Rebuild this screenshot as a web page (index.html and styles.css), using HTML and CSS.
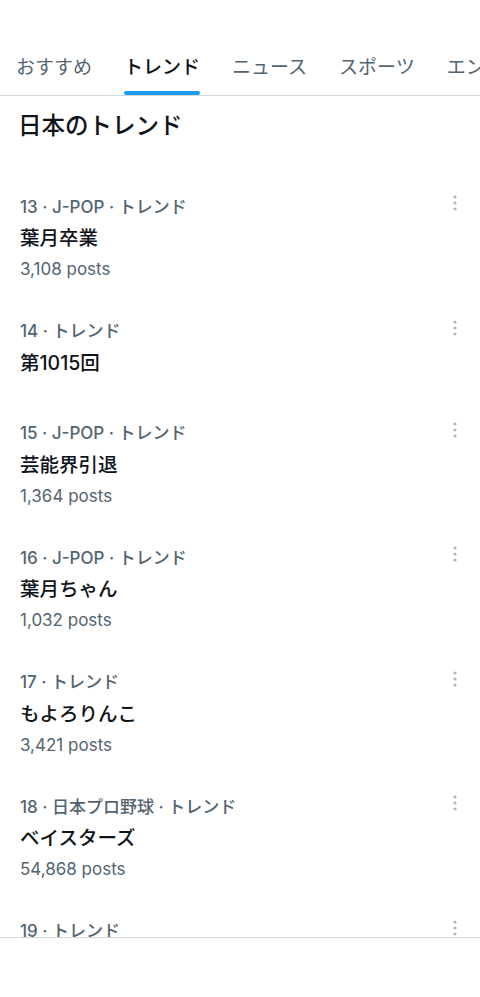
FILE: index.html
```html
<!DOCTYPE html>
<html lang="ja">

<head>
	<meta charset="UTF-8">
	<title>トレンド</title>
	<link rel="stylesheet" href="styles.css">
</head>

<body>
	<div class="status"></div>
	<nav class="tabs">
		<div class="tab">おすすめ</div>
		<div class="tab active">トレンド<span class="bar"></span></div>
		<div class="tab">ニュース</div>
		<div class="tab">スポーツ</div>
		<div class="tab">エンタメ</div>
	</nav>
	<main class="content">
		<h1 class="heading">日本のトレンド</h1>
		<ul class="list">
			<li class="item">
				<div class="meta"><span>13 · J-POP · トレンド</span>
					<svg class="more" viewBox="0 0 18 16"><circle cx="9" cy="2" r="1.6"/><circle cx="9" cy="8" r="1.6"/><circle cx="9" cy="14" r="1.6"/></svg>
				</div>
				<div class="title">葉月卒業</div>
				<div class="posts">3,108 posts</div>
			</li>
			<li class="item">
				<div class="meta"><span>14 · トレンド</span>
					<svg class="more" viewBox="0 0 18 16"><circle cx="9" cy="2" r="1.6"/><circle cx="9" cy="8" r="1.6"/><circle cx="9" cy="14" r="1.6"/></svg>
				</div>
				<div class="title">第1015回</div>
			</li>
			<li class="item">
				<div class="meta"><span>15 · J-POP · トレンド</span>
					<svg class="more" viewBox="0 0 18 16"><circle cx="9" cy="2" r="1.6"/><circle cx="9" cy="8" r="1.6"/><circle cx="9" cy="14" r="1.6"/></svg>
				</div>
				<div class="title">芸能界引退</div>
				<div class="posts">1,364 posts</div>
			</li>
			<li class="item">
				<div class="meta"><span>16 · J-POP · トレンド</span>
					<svg class="more" viewBox="0 0 18 16"><circle cx="9" cy="2" r="1.6"/><circle cx="9" cy="8" r="1.6"/><circle cx="9" cy="14" r="1.6"/></svg>
				</div>
				<div class="title">葉月ちゃん</div>
				<div class="posts">1,032 posts</div>
			</li>
			<li class="item">
				<div class="meta"><span>17 · トレンド</span>
					<svg class="more" viewBox="0 0 18 16"><circle cx="9" cy="2" r="1.6"/><circle cx="9" cy="8" r="1.6"/><circle cx="9" cy="14" r="1.6"/></svg>
				</div>
				<div class="title">もよろりんこ</div>
				<div class="posts">3,421 posts</div>
			</li>
			<li class="item">
				<div class="meta"><span>18 · 日本プロ野球 · トレンド</span>
					<svg class="more" viewBox="0 0 18 16"><circle cx="9" cy="2" r="1.6"/><circle cx="9" cy="8" r="1.6"/><circle cx="9" cy="14" r="1.6"/></svg>
				</div>
				<div class="title">ベイスターズ</div>
				<div class="posts">54,868 posts</div>
			</li>
			<li class="item">
				<div class="meta"><span>19 · トレンド</span>
					<svg class="more" viewBox="0 0 18 16"><circle cx="9" cy="2" r="1.6"/><circle cx="9" cy="8" r="1.6"/><circle cx="9" cy="14" r="1.6"/></svg>
				</div>
			</li>
		</ul>
	</main>
	<footer class="bottom"></footer>
</body>

</html>
```

FILE: styles.css
```css
* {
	margin: 0;
	padding: 0;
	box-sizing: border-box;
}

body {
	height: 997px;
	display: flex;
	flex-direction: column;
	background: #fff;
	color: #0f1419;
	font-family: Inter, "Noto Sans CJK JP", sans-serif;
	overflow: hidden;
}

.status {
	height: 40px;
	flex: none;
}

.tabs {
	flex: none;
	display: flex;
	height: 56px;
	border-bottom: 1px solid #cfd9de;
	overflow: hidden;
	white-space: nowrap;
}

.tab {
	position: relative;
	flex: none;
	display: flex;
	align-items: center;
	padding: 0 16px 4px;
	font-size: 19px;
	color: #536471;
}

.tab.active {
	color: #0f1419;
	font-weight: 500;
}

.tab .bar {
	position: absolute;
	left: 16px;
	right: 16px;
	bottom: 0;
	height: 4px;
	border-radius: 2px;
	background: #1d9bf0;
}

.content {
	flex: 1;
	overflow: hidden;
}

.heading {
	padding: 15px 18px 42px;
	font-size: 23.5px;
	line-height: 30px;
	font-weight: 500;
}

.list {
	list-style: none;
}

.item {
	padding: 12px 16px 27px 20px;
}

.meta {
	display: flex;
	justify-content: space-between;
	align-items: center;
	height: 20px;
	font-size: 17px;
	font-weight: 500;
	color: #536471;
}

.more {
	width: 18px;
	height: 16px;
	margin-top: -4px;
	fill: #aab8c2;
}

.title {
	margin: 10px 0 7px;
	font-size: 19.5px;
	line-height: 26px;
	font-weight: 500;
}

.posts {
	font-size: 17px;
	line-height: 22.5px;
	color: #536471;
}

.bottom {
	flex: none;
	height: 60px;
	border-top: 1px solid #cfd9de;
	background: #fff;
}
```
